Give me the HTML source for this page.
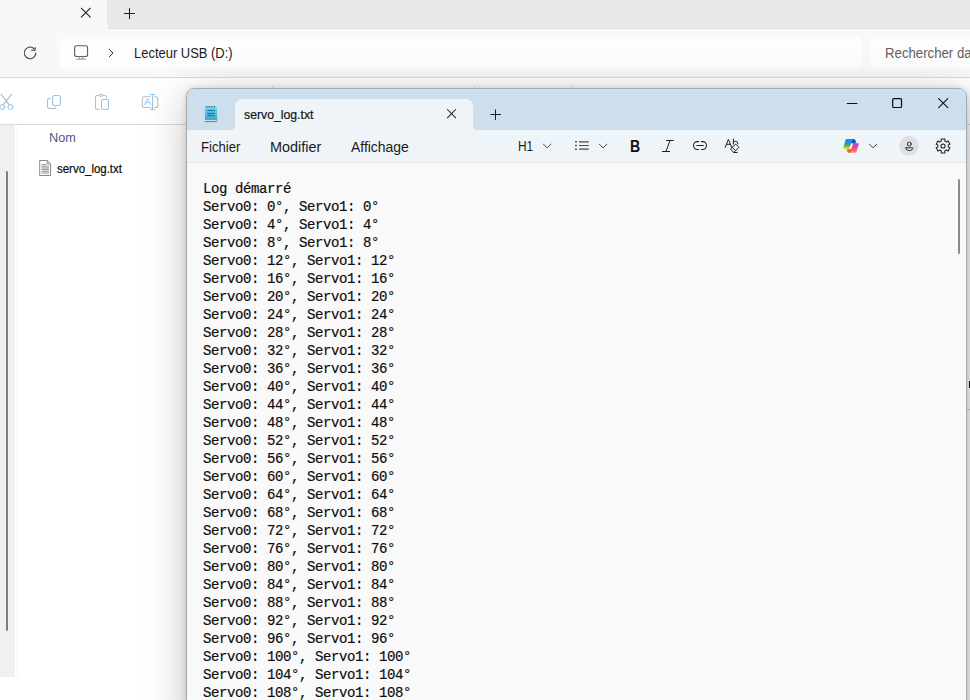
<!DOCTYPE html>
<html lang="fr">
<head>
<meta charset="utf-8">
<title>servo_log.txt</title>
<style>
*{box-sizing:border-box;margin:0;padding:0}
html,body{width:970px;height:700px;overflow:hidden;background:#fff;}
body{position:relative;font-family:"Liberation Sans",sans-serif;color:#1b1b1b;}
.abs{position:absolute}
svg{position:absolute;overflow:visible}
/* Explorer */
#ex-title{left:0;top:0;width:970px;height:29px;background:#e8e8e8}
#ex-tab{left:0;top:0;width:107px;height:29px;background:#f8f8f8;}
#ex-tabcurve{left:107px;top:0;width:20px;height:29px;background:#f8f8f8}
#ex-tabcurve i{position:absolute;left:0;top:0;width:20px;height:29px;background:#e8e8e8;border-bottom-left-radius:6px}
#ex-addr{left:0;top:29px;width:970px;height:48px;background:#f8f8f8}
#ex-addrbox{left:60px;top:37px;width:802px;height:31.5px;background:#fdfdfd;border-radius:5px}
#ex-search{left:870px;top:37px;width:120px;height:31.5px;background:#fdfdfd;border-radius:5px}
#ex-line1{left:0;top:77px;width:970px;height:1px;background:#d9d9d9}
#ex-cmd{left:0;top:78px;width:970px;height:46px;background:#fff}
#ex-line2{left:0;top:124px;width:970px;height:1px;background:#dcdcdc}
#ex-strip{left:0;top:125px;width:15px;height:552px;background:#f0f0f0}
#ex-stripline{left:17px;top:125px;width:1px;height:552px;background:#f3f3f3}
#ex-scroll{left:6px;top:171px;width:2px;height:460px;background:#7e7e7e;border-radius:1px}
.t14{font-size:14px;line-height:16px;white-space:nowrap}
.t12{font-size:12px;line-height:14px;white-space:nowrap}
.sx{transform-origin:0 50%}
/* Notepad */
#np-shadow{left:187px;top:88px;width:780px;height:640px;border-radius:8px;box-shadow:0 10px 44px 0 rgba(0,0,0,.25),0 1px 7px 0 rgba(0,0,0,.19)}
#np{left:186px;top:88px;width:781px;height:640px;border-radius:8px;border:1px solid #a8a9ab;background:#f9f9f9;overflow:hidden}
#np-title{left:0;top:0;width:781px;height:41px;background:#cddeec}
#np-tab{left:48px;top:10px;width:238px;height:32px;background:#eff4f9;border-radius:7px 7px 0 0}
#np-fl,#np-fr{top:37px;width:4px;height:4px}
#np-fl{left:44px;background:radial-gradient(circle at 0 0,#cddeec 3.6px,#eff4f9 4.4px)}
#np-fr{left:286px;background:radial-gradient(circle at 100% 0,#cddeec 3.6px,#eff4f9 4.4px)}
#np-menu{left:0;top:41px;width:781px;height:33px;background:#eff4f9;border-bottom:1px solid #e2e6ea}
#np-text{left:16px;top:90.75px;font-family:"Liberation Mono","DejaVu Sans Mono",monospace;font-size:14px;letter-spacing:-.4px;line-height:18px;white-space:pre;color:#0c0c0c;-webkit-text-stroke:.18px #0c0c0c}
#np-scroll{left:771px;top:90px;width:2px;height:75px;background:#8a8a8a;border-radius:1px}
</style>
</head>
<body>
<!-- ===== File Explorer (background window) ===== -->
<div class="abs" id="ex-title"></div>
<div class="abs" id="ex-tabcurve"><i></i></div>
<div class="abs" id="ex-tab"></div>
<div class="abs" id="ex-addr"></div>
<div class="abs" id="ex-addrbox"></div>
<div class="abs" id="ex-search"></div>
<div class="abs" id="ex-line1"></div>
<div class="abs" id="ex-cmd"></div>
<div class="abs" id="ex-line2"></div>
<div class="abs" id="ex-line0" style="left:108px;top:28px;width:862px;height:1px;background:#e0e0e0"></div>
<div class="abs" style="left:272px;top:86px;width:1px;height:30px;background:#e4e4e4"></div>
<div class="abs" style="left:474px;top:86px;width:1px;height:30px;background:#e4e4e4"></div>
<div class="abs" style="left:572px;top:86px;width:1px;height:30px;background:#e4e4e4"></div>
<div class="abs" id="ex-strip"></div>
<div class="abs" id="ex-stripline"></div>
<div class="abs" id="ex-scroll"></div>


<svg id="ex-icons" width="970" height="130" viewBox="0 0 970 130" style="left:0;top:0" fill="none" stroke-linecap="round" stroke-linejoin="round">
  <!-- tab close -->
  <path d="M81.3 8.2 L90.3 17.2 M90.3 8.2 L81.3 17.2" stroke="#1f1f1f" stroke-width="1.05"/>
  <!-- new tab -->
  <path d="M124.5 13.5 H134.5 M129.5 8.5 V18.5" stroke="#1f1f1f" stroke-width="1.05"/>
  <!-- refresh -->
  <path d="M35.85 53.1 A5.8 5.8 0 1 1 34.1 48.75" stroke="#3a3a3a" stroke-width="1.05"/>
  <path d="M35.1 47.5 V50.2 H31.5" stroke="#3a3a3a" stroke-width="1.05"/>
  <!-- monitor -->
  <rect x="74.6" y="45.7" width="13" height="10.8" rx="2" stroke="#5c5c5c" stroke-width="1.1"/>
  <path d="M79.6 56.8 V58.8 M82.6 56.8 V58.8" stroke="#9a9a9a" stroke-width="1"/>
  <path d="M76.6 59.1 H85.6" stroke="#8a8a8a" stroke-width="1"/>
  <!-- chevron -->
  <path d="M109.3 49.4 L113 53.1 L109.3 56.8" stroke="#2b2b2b" stroke-width="1"/>
  <!-- scissors -->
  <path d="M1 94.2 L9.2 104.8 M11.6 94.2 L3.4 104.8" stroke="#ababab" stroke-width="1.05"/>
  <circle cx="2.3" cy="107" r="2.5" stroke="#8cc4ee" stroke-width="1"/>
  <circle cx="10.4" cy="107" r="2.5" stroke="#8cc4ee" stroke-width="1"/>
  <!-- copy -->
  <path d="M50.4 98.5 H49.7 Q47.5 98.5 47.5 100.7 V106.3 Q47.5 108.5 49.7 108.5 H53.5 Q55.5 108.5 55.7 107.3" stroke="#b9b9b9" stroke-width="1.05"/>
  <rect x="52.5" y="95.5" width="8" height="10" rx="2.2" stroke="#93c6f0" stroke-width="1.1"/>
  <!-- paste -->
  <path d="M99.4 109.2 H97.5 Q95.5 109.2 95.5 107.2 V97.5 Q95.5 95.5 97.5 95.5 H104.6 Q106.5 95.5 106.5 97.4 V97.8" stroke="#b9b9b9" stroke-width="1.05"/>
  <ellipse cx="101" cy="95.3" rx="2.3" ry="1" stroke="#b9b9b9" stroke-width="1" fill="#fff"/>
  <rect x="101.5" y="99.5" width="7" height="10" rx="1.7" stroke="#93c6f0" stroke-width="1.1"/>
  <!-- rename -->
  <path d="M150.8 96.8 H144.6 Q142.4 96.8 142.4 99 V105.2 Q142.4 107.4 144.6 107.4 H150.8 M154.2 96.8 H155.6 Q157.8 96.8 157.8 99 V105.2 Q157.8 107.4 155.6 107.4 H154.2" stroke="#bcbcbc" stroke-width="1.05" stroke-linecap="butt"/>
  <path d="M144.4 104.6 L147.5 98.3 L150.6 104.6 M145.6 102.3 H149.4" stroke="#9ccaf0" stroke-width="1"/>
  <path d="M152.5 94.5 V109.5 M150.3 94.5 H154.7 M150.3 109.5 H154.7" stroke="#94c7f0" stroke-width="1.15"/>
</svg>
<svg id="ex-fileicon" width="20" height="24" viewBox="0 0 20 24" style="left:36px;top:156px" fill="none">
  <path d="M3.7 4.5 H11.2 L14.6 7.9 V19.5 H3.7 Z" fill="#fdfdfd" stroke="#8a8a8a" stroke-width="1"/>
  <path d="M11.2 4.5 V7.9 H14.6" stroke="#8a8a8a" stroke-width="1"/>
  <path d="M5.5 8.6 H10.4 M5.5 10.3 H13 M5.5 12 H13 M5.5 13.6 H13 M5.5 15.3 H13 M5.5 17 H13" stroke="#858585" stroke-width=".9"/>
</svg>


<div class="abs t14 sx" id="ex-path" style="transform:scaleX(0.925);left:133.5px;top:45px;color:#1b1b1b">Lecteur USB (D:)</div>
<div class="abs t14 sx" id="ex-searchtxt" style="transform:scaleX(0.943);left:885.3px;top:45px;color:#5f5f5f">Rechercher dans</div>
<div class="abs t12 sx" id="ex-nom" style="transform:scaleX(1.06);left:49px;top:131px;color:#4c5a82">Nom</div>
<div class="abs t12 sx" id="ex-file" style="transform:scaleX(0.955);left:57px;top:162px;color:#0a0a0a;-webkit-text-stroke:.2px #0a0a0a">servo_log.txt</div>

<div class="abs" id="ex-rmark" style="left:969px;top:381px;width:1px;height:7px;background:#1a1a1a"></div>
<div class="abs" id="ex-rline" style="left:967px;top:409px;width:3px;height:1px;background:#d0d0d0"></div>
<!-- ===== Notepad (foreground window) ===== -->
<div class="abs" id="np-shadow"></div>
<div class="abs" id="np">
  <div class="abs" id="np-title"></div>
  <div class="abs" id="np-menu"></div>
  <div class="abs" id="np-tab"></div><div class="abs" id="np-fl"></div><div class="abs" id="np-fr"></div>
  
<svg id="np-icons" width="781" height="80" viewBox="187 89 781 80" style="left:0;top:0" fill="none" stroke-linecap="round" stroke-linejoin="round">
  <defs>
    <linearGradient id="gnp" x1="0" y1="0" x2="0" y2="1"><stop offset="0" stop-color="#74d8f2"/><stop offset="1" stop-color="#3ba6c6"/></linearGradient>
    <linearGradient id="gc1" gradientUnits="userSpaceOnUse" x1="0" y1="139" x2="0" y2="149"><stop offset="0" stop-color="#1598ee"/><stop offset=".35" stop-color="#1d8fd6"/><stop offset=".62" stop-color="#3cae62"/><stop offset=".9" stop-color="#e8cf08"/><stop offset="1" stop-color="#f2d400"/></linearGradient>
    <linearGradient id="gc2" gradientUnits="userSpaceOnUse" x1="0" y1="143" x2="0" y2="153"><stop offset="0" stop-color="#a846e6"/><stop offset=".45" stop-color="#e84a90"/><stop offset=".75" stop-color="#f8667a"/><stop offset="1" stop-color="#ffa040"/></linearGradient>
    <linearGradient id="gc4" gradientUnits="userSpaceOnUse" x1="851" y1="139" x2="856" y2="143.5"><stop offset="0" stop-color="#0a36c4"/><stop offset=".6" stop-color="#0e52d6"/><stop offset="1" stop-color="#1a86ea"/></linearGradient>
    <linearGradient id="gc5" gradientUnits="userSpaceOnUse" x1="847" y1="149" x2="851" y2="153"><stop offset="0" stop-color="#ff7a2c"/><stop offset="1" stop-color="#e63a2c"/></linearGradient>
  </defs>
  <!-- notepad app icon -->
  <rect x="204.9" y="106.4" width="12.2" height="14" rx=".6" fill="url(#gnp)" stroke="none"/>
  <path d="M205.2 121.6 H216 Q217 121.6 217 120.6" stroke="#b4560f" stroke-width="1"/>
  <path d="M205 120.7 H216.4" stroke="#f4f8fb" stroke-width=".7"/>
  <path d="M206.6 106 V107.2 M209.2 106 V107.2 M211.8 106 V107.2 M214.4 106 V107.2" stroke="#0a6f93" stroke-width="1.3" stroke-linecap="butt"/>
  <path d="M207.4 110.5 H214.8 M207.4 113.4 H214.8 M207.4 115.6 H214.8" stroke="#0a6f93" stroke-width=".95" stroke-linecap="butt"/>
  <!-- tab close -->
  <path d="M447.4 109.5 L455.7 117.8 M455.7 109.5 L447.4 117.8" stroke="#1f1f1f" stroke-width="1.05"/>
  <!-- new tab -->
  <path d="M490.8 114.5 H500.6 M495.5 109.7 V119.5" stroke="#1f1f1f" stroke-width="1.05"/>
  <!-- window controls -->
  <path d="M847.2 103.5 H857" stroke="#111" stroke-width="1"/>
  <rect x="892.7" y="98.7" width="8.8" height="8.8" rx="1.1" stroke="#0a0a0a" stroke-width="1.2"/>
  <path d="M938.6 98.7 L947.8 107.7 M947.8 98.7 L938.6 107.7" stroke="#111" stroke-width="1.1"/>
</svg>

<svg id="np-tools" width="781" height="80" viewBox="187 89 781 80" style="left:0;top:0" fill="none" stroke-linecap="round" stroke-linejoin="round">
  <!-- H1 chevron -->
  <path d="M543.4 144.2 L547.2 147.9 L551 144.2" stroke="#444" stroke-width="1"/>
  <!-- list -->
  <path d="M579 141.8 H588.8 M579 145.5 H588.8 M579 149.2 H588.8" stroke="#4a4a4a" stroke-width="1.2" stroke-linecap="butt"/>
  <path d="M575.2 141.8 H576.8 M575.2 145.5 H576.8 M575.2 149.2 H576.8" stroke="#333" stroke-width="1.5" stroke-linecap="butt"/>
  <path d="M599.3 144.2 L603.1 147.9 L606.9 144.2" stroke="#444" stroke-width="1"/>
  <!-- italic -->
  <path d="M666.4 140.5 H673.4 M662.4 151.5 H669.6 M670 140.5 L666 151.5" stroke="#222" stroke-width="1"/>
  <!-- link -->
  <path d="M698.6 141.6 H697.4 A3.9 3.9 0 0 0 697.4 149.4 H698.6 M701.4 141.6 H702.6 A3.9 3.9 0 0 1 702.6 149.4 H701.4 M696.8 145.5 H703.4" stroke="#222" stroke-width="1.05"/>
  <!-- Ab eraser -->
  <path d="M725.2 147.4 L728.4 139.4 L731.5 147 M726.4 144.3 H730.4" stroke="#222" stroke-width="1"/>
  <path d="M733.4 139.2 V144 M733.5 142.4 Q734.4 141.1 736 141.2 Q737.9 141.4 737.9 143.8" stroke="#222" stroke-width="1"/>
  <path d="M735.2 144.5 Q735.7 144 736.2 144.5 L738.6 146.8 Q739.1 147.3 738.6 147.8 L734.3 151.9 Q733.8 152.3 733.3 151.9 L730.7 149.6 Q730.2 149.1 730.7 148.6 Z" stroke="#222" stroke-width="1" fill="#eff4f9"/>
  <path d="M732.2 147.4 L735.6 150.6 M733.6 152.5 H737.2" stroke="#222" stroke-width="1"/>
  <!-- copilot -->
  <path d="M851.4 139.6 H853.6 Q855 139.6 855.3 141 L855.9 143.2 H851 Z" fill="url(#gc4)" stroke="url(#gc4)" stroke-width="1"/>
  <path d="M847.4 149.4 H851.4 L850.4 152.3 H849 Q847.7 152.3 847.4 151 Z" fill="url(#gc5)" stroke="url(#gc5)" stroke-width="1"/>
  <path d="M846.3 139.9 H851.6 L849.2 147.9 H844.1 Z" fill="url(#gc1)" stroke="url(#gc1)" stroke-width="1.6"/>
  <path d="M853.6 144 H858 L855.6 152 H851 Z" fill="url(#gc2)" stroke="url(#gc2)" stroke-width="1.6"/>
  <path d="M852.4 143.4 L850.4 149 L849.6 149 L851.4 143.8 Z" fill="#ffffff" stroke="#fff" stroke-width=".5" opacity=".95"/>
  <path d="M869.4 144.2 L873.1 147.8 L876.8 144.2" stroke="#444" stroke-width="1"/>
  <!-- avatar -->
  <circle cx="909" cy="145.9" r="9.8" fill="#dcdfe3" stroke="none"/>
  <circle cx="909.3" cy="144" r="1.95" stroke="#2a2a2a" stroke-width=".95"/>
  <path d="M906.2 147.7 H912.4 Q913 147.7 912.9 148.3 Q912.5 150.5 909.3 150.5 Q906.1 150.5 905.7 148.3 Q905.6 147.7 906.2 147.7 Z" stroke="#2a2a2a" stroke-width=".95"/>
  <!-- gear -->
  <path d="M941.36 140.98 L941.19 139.05 L944.91 139.05 L944.74 140.98 A5.3 5.3 0 0 1 946.55 142.02 L948.14 140.91 L950.00 144.14 L948.25 144.95 A5.3 5.3 0 0 1 948.25 147.05 L950.00 147.86 L948.14 151.09 L946.55 149.98 A5.3 5.3 0 0 1 944.74 151.02 L944.91 152.95 L941.19 152.95 L941.36 151.02 A5.3 5.3 0 0 1 939.55 149.98 L937.96 151.09 L936.10 147.86 L937.85 147.05 A5.3 5.3 0 0 1 937.85 144.95 L936.10 144.14 L937.96 140.91 L939.55 142.02 A5.3 5.3 0 0 1 941.36 140.98Z" stroke="#1f1f1f" stroke-width="1.05"/>
  <circle cx="943.05" cy="146" r="2.05" stroke="#1f1f1f" stroke-width="1.05"/>
</svg>

  <div class="abs t12 sx" id="np-tabtxt" style="transform:scaleX(.98);left:57px;top:18.5px;font-size:12.5px;color:#141414;-webkit-text-stroke:.2px #141414">servo_log.txt</div>
  <div class="abs t14 sx" id="m1" style="transform:scaleX(0.94);left:14px;top:49.6px">Fichier</div>
  <div class="abs t14 sx" id="m2" style="transform:scaleX(1.03);left:83px;top:49.6px">Modifier</div>
  <div class="abs t14 sx" id="m3" style="transform:scaleX(0.995);left:164px;top:49.6px">Affichage</div>
  <div class="abs t14 sx" id="h1" style="transform:scaleX(0.82);left:331px;top:49px;font-size:14.5px;color:#222">H1</div>
  <div class="abs" id="bold" style="left:443.2px;top:49px;font-size:16px;line-height:18px;font-weight:bold;color:#111;transform:scaleX(.88);transform-origin:0 50%">B</div>
  <pre class="abs" id="np-text">Log démarré
Servo0: 0°, Servo1: 0°
Servo0: 4°, Servo1: 4°
Servo0: 8°, Servo1: 8°
Servo0: 12°, Servo1: 12°
Servo0: 16°, Servo1: 16°
Servo0: 20°, Servo1: 20°
Servo0: 24°, Servo1: 24°
Servo0: 28°, Servo1: 28°
Servo0: 32°, Servo1: 32°
Servo0: 36°, Servo1: 36°
Servo0: 40°, Servo1: 40°
Servo0: 44°, Servo1: 44°
Servo0: 48°, Servo1: 48°
Servo0: 52°, Servo1: 52°
Servo0: 56°, Servo1: 56°
Servo0: 60°, Servo1: 60°
Servo0: 64°, Servo1: 64°
Servo0: 68°, Servo1: 68°
Servo0: 72°, Servo1: 72°
Servo0: 76°, Servo1: 76°
Servo0: 80°, Servo1: 80°
Servo0: 84°, Servo1: 84°
Servo0: 88°, Servo1: 88°
Servo0: 92°, Servo1: 92°
Servo0: 96°, Servo1: 96°
Servo0: 100°, Servo1: 100°
Servo0: 104°, Servo1: 104°
Servo0: 108°, Servo1: 108°</pre>
  <div class="abs" id="np-scroll"></div>
</div>
</body>
</html>
